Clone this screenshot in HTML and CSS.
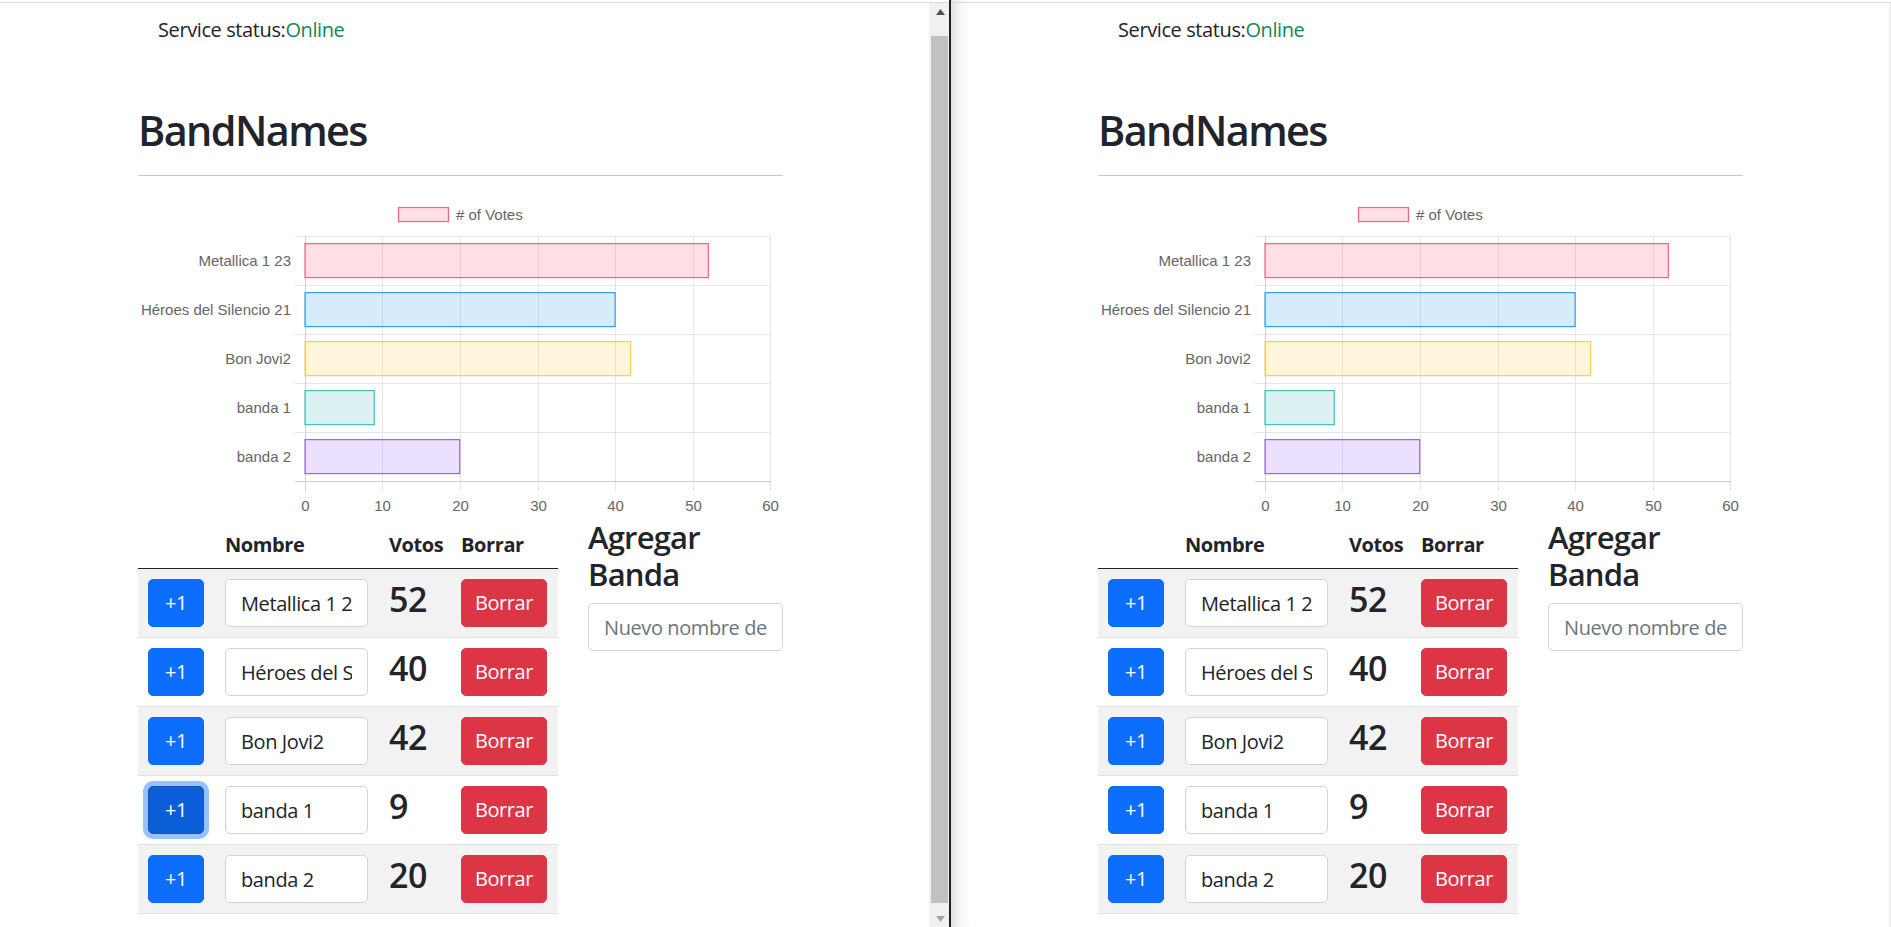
FILE: index.html
```html
<!DOCTYPE html>
<html lang="es">
<head>
<meta charset="utf-8">
<title>BandNames</title>
<link rel="stylesheet" href="styles.css">
</head>
<body>
<div class="screen">
  <div class="win win-left">
    <div class="win-body">
      <div class="viewport">
        <div class="page page-left">
          <div class="status">Service status:<span class="online">Online</span></div>
          <h1 class="title">BandNames</h1>
          <hr class="rule">
          <svg class="chart" viewBox="0 0 645 342" width="645" height="342">
            <rect x="260.5" y="31.5" width="50" height="14" fill="rgba(255,99,132,0.2)" stroke="rgb(255,99,132)" stroke-width="1.25"/>
            <text class="ct" x="318" y="38.5">&#35; of Votes</text>
            <g stroke="#e6e6e6" stroke-width="1">
              <line x1="244.5" y1="60" x2="244.5" y2="315"/>
              <line x1="322.5" y1="60" x2="322.5" y2="315"/>
              <line x1="400.5" y1="60" x2="400.5" y2="315"/>
              <line x1="477.5" y1="60" x2="477.5" y2="315"/>
              <line x1="555.5" y1="60" x2="555.5" y2="315"/>
              <line x1="632.5" y1="60" x2="632.5" y2="315"/>
              <line x1="157" y1="60.5" x2="633" y2="60.5"/>
              <line x1="157" y1="109.5" x2="633" y2="109.5"/>
              <line x1="157" y1="158.5" x2="633" y2="158.5"/>
              <line x1="157" y1="207.5" x2="633" y2="207.5"/>
              <line x1="157" y1="256.5" x2="633" y2="256.5"/>
            </g>
            <g stroke="#cfcfcf" stroke-width="1">
              <line x1="167.5" y1="60" x2="167.5" y2="315"/>
              <line x1="157" y1="305.5" x2="633" y2="305.5"/>
            </g>
            <rect x="167" y="67.6" width="403.3" height="34" fill="rgba(255,99,132,0.2)" stroke="rgb(255,99,132)" stroke-width="1.25"/>
            <rect x="167" y="116.6" width="310.1" height="34" fill="rgba(54,162,235,0.2)" stroke="rgb(54,162,235)" stroke-width="1.25"/>
            <rect x="167" y="165.6" width="325.6" height="34" fill="rgba(255,206,86,0.2)" stroke="rgb(255,206,86)" stroke-width="1.25"/>
            <rect x="167" y="214.6" width="69.3" height="34" fill="rgba(75,192,192,0.2)" stroke="rgb(75,192,192)" stroke-width="1.25"/>
            <rect x="167" y="263.6" width="154.7" height="34" fill="rgba(153,102,255,0.2)" stroke="rgb(153,102,255)" stroke-width="1.25"/>
            <g class="ylab">
              <text x="153" y="84.5">Metallica 1 23</text>
              <text x="153" y="133.5">Héroes del Silencio 21</text>
              <text x="153" y="182.5">Bon Jovi2</text>
              <text x="153" y="231.5">banda 1</text>
              <text x="153" y="280.5">banda 2</text>
            </g>
            <g class="xlab">
              <text x="167.5" y="329">0</text>
              <text x="244.5" y="329">10</text>
              <text x="322.5" y="329">20</text>
              <text x="400.5" y="329">30</text>
              <text x="477.5" y="329">40</text>
              <text x="555.5" y="329">50</text>
              <text x="632.5" y="329">60</text>
            </g>
          </svg>
          <div class="content-row">
            <table class="bands">
              <colgroup><col class="c1"><col class="c2"><col class="c3"><col class="c4"></colgroup>
              <thead>
                <tr><th></th><th>Nombre</th><th>Votos</th><th>Borrar</th></tr>
              </thead>
              <tbody>
                <tr><td><button class="btn btn-vote">+1</button></td><td><input class="field field-name" value="Metallica 1 23"></td><td><span class="votes">52</span></td><td><button class="btn btn-del">Borrar</button></td></tr>
                <tr><td><button class="btn btn-vote">+1</button></td><td><input class="field field-name" value="Héroes del Silencio 21"></td><td><span class="votes">40</span></td><td><button class="btn btn-del">Borrar</button></td></tr>
                <tr><td><button class="btn btn-vote">+1</button></td><td><input class="field field-name" value="Bon Jovi2"></td><td><span class="votes">42</span></td><td><button class="btn btn-del">Borrar</button></td></tr>
                <tr><td><button class="btn btn-vote is-focused">+1</button></td><td><input class="field field-name" value="banda 1"></td><td><span class="votes">9</span></td><td><button class="btn btn-del">Borrar</button></td></tr>
                <tr><td><button class="btn btn-vote">+1</button></td><td><input class="field field-name" value="banda 2"></td><td><span class="votes">20</span></td><td><button class="btn btn-del">Borrar</button></td></tr>
              </tbody>
            </table>
            <div class="add-col">
              <h3 class="add-title">Agregar Banda</h3>
              <input class="field field-new" placeholder="Nuevo nombre de banda">
            </div>
          </div>
        </div>
      </div>
      <div class="scrollbar">
        <div class="sb-btn"><svg width="9" height="6" viewBox="0 0 9 6"><path d="M0 6 L4.5 0 L9 6 Z" fill="#505050"/></svg></div>
        <div class="sb-track"><div class="sb-thumb"></div></div>
        <div class="sb-btn"><svg width="9" height="6" viewBox="0 0 9 6"><path d="M0 0 L9 0 L4.5 6 Z" fill="#a3a3a3"/></svg></div>
      </div>
    </div>
  </div>
  <div class="divider"></div>
  <div class="win win-right">
    <div class="win-body">
      <div class="viewport">
        <div class="page page-right">
          <div class="status">Service status:<span class="online">Online</span></div>
          <h1 class="title">BandNames</h1>
          <hr class="rule">
          <svg class="chart" viewBox="0 0 645 342" width="645" height="342">
            <rect x="260.5" y="31.5" width="50" height="14" fill="rgba(255,99,132,0.2)" stroke="rgb(255,99,132)" stroke-width="1.25"/>
            <text class="ct" x="318" y="38.5">&#35; of Votes</text>
            <g stroke="#e6e6e6" stroke-width="1">
              <line x1="244.5" y1="60" x2="244.5" y2="315"/>
              <line x1="322.5" y1="60" x2="322.5" y2="315"/>
              <line x1="400.5" y1="60" x2="400.5" y2="315"/>
              <line x1="477.5" y1="60" x2="477.5" y2="315"/>
              <line x1="555.5" y1="60" x2="555.5" y2="315"/>
              <line x1="632.5" y1="60" x2="632.5" y2="315"/>
              <line x1="157" y1="60.5" x2="633" y2="60.5"/>
              <line x1="157" y1="109.5" x2="633" y2="109.5"/>
              <line x1="157" y1="158.5" x2="633" y2="158.5"/>
              <line x1="157" y1="207.5" x2="633" y2="207.5"/>
              <line x1="157" y1="256.5" x2="633" y2="256.5"/>
            </g>
            <g stroke="#cfcfcf" stroke-width="1">
              <line x1="167.5" y1="60" x2="167.5" y2="315"/>
              <line x1="157" y1="305.5" x2="633" y2="305.5"/>
            </g>
            <rect x="167" y="67.6" width="403.3" height="34" fill="rgba(255,99,132,0.2)" stroke="rgb(255,99,132)" stroke-width="1.25"/>
            <rect x="167" y="116.6" width="310.1" height="34" fill="rgba(54,162,235,0.2)" stroke="rgb(54,162,235)" stroke-width="1.25"/>
            <rect x="167" y="165.6" width="325.6" height="34" fill="rgba(255,206,86,0.2)" stroke="rgb(255,206,86)" stroke-width="1.25"/>
            <rect x="167" y="214.6" width="69.3" height="34" fill="rgba(75,192,192,0.2)" stroke="rgb(75,192,192)" stroke-width="1.25"/>
            <rect x="167" y="263.6" width="154.7" height="34" fill="rgba(153,102,255,0.2)" stroke="rgb(153,102,255)" stroke-width="1.25"/>
            <g class="ylab">
              <text x="153" y="84.5">Metallica 1 23</text>
              <text x="153" y="133.5">Héroes del Silencio 21</text>
              <text x="153" y="182.5">Bon Jovi2</text>
              <text x="153" y="231.5">banda 1</text>
              <text x="153" y="280.5">banda 2</text>
            </g>
            <g class="xlab">
              <text x="167.5" y="329">0</text>
              <text x="244.5" y="329">10</text>
              <text x="322.5" y="329">20</text>
              <text x="400.5" y="329">30</text>
              <text x="477.5" y="329">40</text>
              <text x="555.5" y="329">50</text>
              <text x="632.5" y="329">60</text>
            </g>
          </svg>
          <div class="content-row">
            <table class="bands">
              <colgroup><col class="c1"><col class="c2"><col class="c3"><col class="c4"></colgroup>
              <thead>
                <tr><th></th><th>Nombre</th><th>Votos</th><th>Borrar</th></tr>
              </thead>
              <tbody>
                <tr><td><button class="btn btn-vote">+1</button></td><td><input class="field field-name" value="Metallica 1 23"></td><td><span class="votes">52</span></td><td><button class="btn btn-del">Borrar</button></td></tr>
                <tr><td><button class="btn btn-vote">+1</button></td><td><input class="field field-name" value="Héroes del Silencio 21"></td><td><span class="votes">40</span></td><td><button class="btn btn-del">Borrar</button></td></tr>
                <tr><td><button class="btn btn-vote">+1</button></td><td><input class="field field-name" value="Bon Jovi2"></td><td><span class="votes">42</span></td><td><button class="btn btn-del">Borrar</button></td></tr>
                <tr><td><button class="btn btn-vote">+1</button></td><td><input class="field field-name" value="banda 1"></td><td><span class="votes">9</span></td><td><button class="btn btn-del">Borrar</button></td></tr>
                <tr><td><button class="btn btn-vote">+1</button></td><td><input class="field field-name" value="banda 2"></td><td><span class="votes">20</span></td><td><button class="btn btn-del">Borrar</button></td></tr>
              </tbody>
            </table>
            <div class="add-col">
              <h3 class="add-title">Agregar Banda</h3>
              <input class="field field-new" placeholder="Nuevo nombre de banda">
            </div>
          </div>
        </div>
      </div>
      <div class="edge"></div>
    </div>
  </div>
</div>
</body>
</html>
```
FILE: styles.css
```css
* { box-sizing: border-box; }

html, body {
  margin: 0;
  padding: 0;
}

body {
  width: 1891px;
  height: 927px;
  overflow: hidden;
  background: #fff;
  font-family: "Open Sans", "Noto Sans", sans-serif;
  color: #212529;
  letter-spacing: -0.025em;
}

.screen {
  display: flex;
  height: 927px;
}

.win {
  display: flex;
  flex-direction: column;
  padding-top: 2px;
  height: 927px;
}

.win-left { width: 949px; }

.win-right {
  width: 940px;
  background: linear-gradient(to right, #e3e3e3 0, #f4f4f4 8px, #fff 20px);
}

.divider {
  width: 2px;
  height: 927px;
  background: #1f1f1f;
}

.win-body {
  flex: 1;
  display: flex;
  min-height: 0;
  border-top: 1px solid #d9d9d9;
}

.viewport {
  flex: 1;
  overflow: hidden;
}

.edge {
  width: 2px;
  background: #efefef;
}

/* scrollbar */
.scrollbar {
  width: 20px;
  display: flex;
  flex-direction: column;
  background: #f0f0f0;
}

.sb-btn {
  height: 17px;
  display: flex;
  align-items: center;
  justify-content: center;
  padding-left: 2px;
}

.sb-track {
  flex: 1;
  padding: 16px 1px 7px 2px;
  display: flex;
}

.sb-thumb {
  flex: 1;
  background: #c1c1c1;
}

/* page */
.page { width: 645px; }
.page-left { margin-left: 138px; }
.page-right { margin-left: 147px; }

.status {
  margin-top: 12px;
  padding-left: 20px;
  font-size: 20px;
  line-height: 30px;
}

.online { color: #198754; }

.title {
  margin: 61px 0 0;
  font-size: 41.4px;
  line-height: 1.2;
  font-weight: 600;
  letter-spacing: -1.6px;
}

.rule {
  margin: 19px 0 0;
  border: 0;
  border-top: 1px solid #c9c9c9;
  height: 0;
}

.chart {
  display: block;
  width: 645px;
  height: 342px;
}

.chart text {
  font-family: "Liberation Sans", Arial, sans-serif;
  font-size: 15px;
  fill: #666;
  letter-spacing: 0;
  dominant-baseline: central;
}

.chart .ylab text { text-anchor: end; }
.chart .xlab text { text-anchor: middle; }

.content-row {
  display: flex;
  gap: 30px;
  align-items: flex-start;
}

.bands {
  width: 420px;
  border-collapse: separate;
  border-spacing: 0;
  table-layout: fixed;
}

.c1 { width: 77px; }
.c2 { width: 164px; }
.c3 { width: 72px; }
.c4 { width: 107px; }

.bands th {
  text-align: left;
  padding: 12px 10px 8px;
  font-size: 20px;
  line-height: 30px;
  font-weight: 700;
  vertical-align: bottom;
  border-bottom: 1px solid #212529;
  white-space: nowrap;
}

.bands td {
  padding: 10px;
  vertical-align: top;
  border-bottom: 1px solid #dee2e6;
}

.bands tbody tr:nth-child(odd) td { background: #f2f2f2; }

.btn {
  display: block;
  height: 48px;
  padding: 0;
  border: 1px solid transparent;
  border-radius: 5px;
  font-family: inherit;
  font-size: 20px;
  line-height: 45px;
  letter-spacing: inherit;
  color: #fff;
  text-align: center;
  cursor: pointer;
}

.btn-vote {
  width: 56px;
  background: #0d6efd;
  border-color: #0d6efd;
}

.btn-vote.is-focused {
  background: #0b5ed7;
  border-color: #0a58ca;
  box-shadow: 0 0 0 5px rgba(49, 132, 253, 0.5);
}

.btn-del {
  width: 86px;
  background: #dc3545;
  border-color: #dc3545;
}

.field {
  display: block;
  height: 48px;
  padding: 1px 15px 0;
  border: 1px solid #ced4da;
  border-radius: 5px;
  background: #fff;
  font-family: inherit;
  font-size: 20px;
  letter-spacing: inherit;
  color: #212529;
  outline: none;
}

.field-name { width: 143px; }
.field-new { width: 195px; }

.field::placeholder { color: #6c757d; opacity: 1; }

.votes {
  display: block;
  font-size: 34px;
  line-height: 40px;
  font-weight: 600;
  letter-spacing: -0.5px;
}

.add-col {
  width: 195px;
  padding-top: 1px;
}

.add-title {
  margin: 0 0 10px;
  font-size: 31px;
  line-height: 1.2;
  font-weight: 600;
  letter-spacing: -0.8px;
}
```
